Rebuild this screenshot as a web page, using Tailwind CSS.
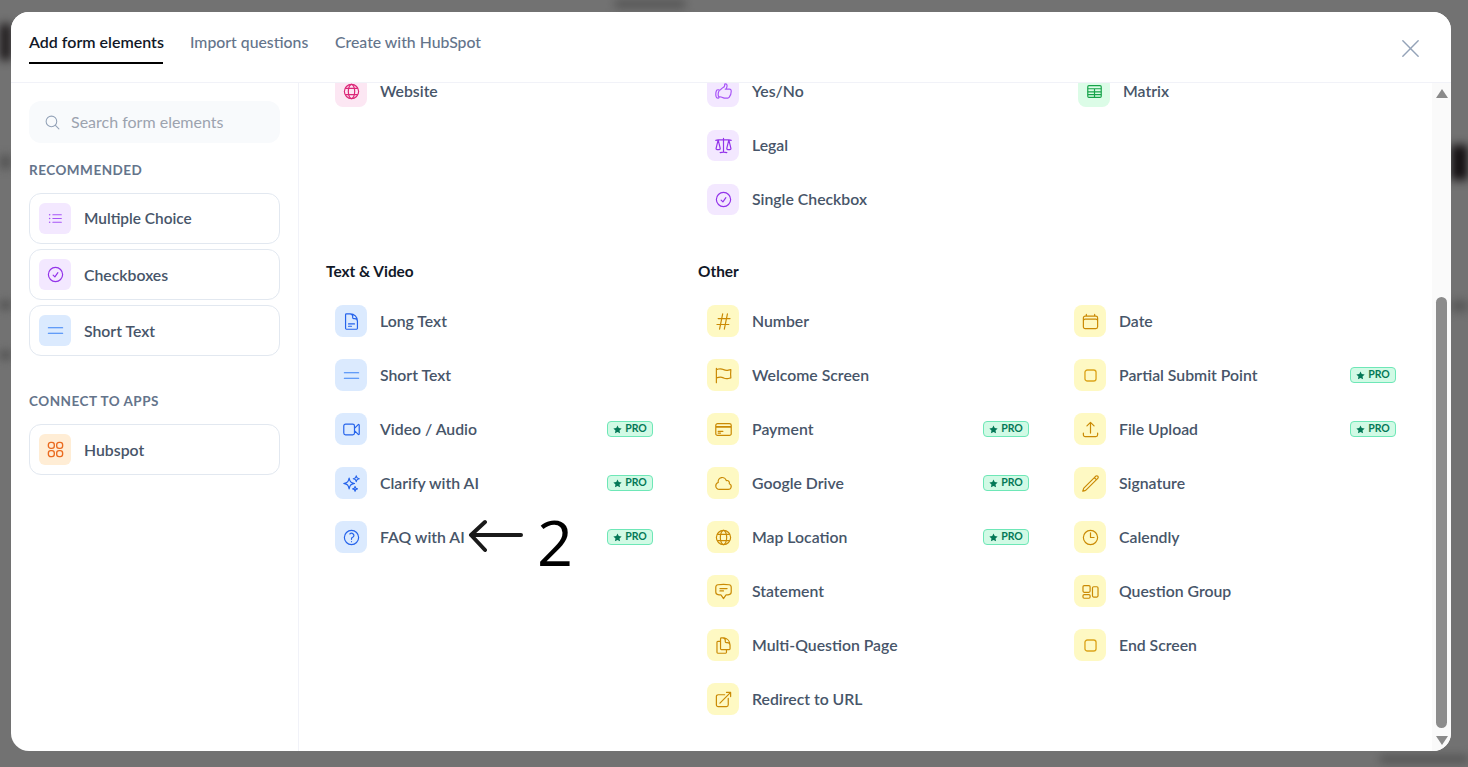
<!DOCTYPE html>
<html lang="en">
<head>
  <meta charset="UTF-8">
  <title>Add form elements</title>
  <script src="https://cdn.jsdelivr.net/npm/@tailwindcss/browser@4"></script>
</head>
<body class="relative w-[1468px] h-[767px] overflow-hidden bg-[#727272] font-['Lato',sans-serif]">

  <!-- Blurred page behind the modal -->
  <div class="absolute left-0 top-[24px] w-[11px] h-[36px] bg-[#1a1618] blur-[5px]"></div>
  <div class="absolute left-0 top-[155px] w-[11px] h-[14px] bg-[#555] blur-[4px]"></div>
  <div class="absolute left-0 top-[300px] w-[11px] h-[10px] bg-[#555] blur-[4px]"></div>
  <div class="absolute left-0 top-[350px] w-[11px] h-[10px] bg-[#555] blur-[4px]"></div>
  <div class="absolute left-[1451px] top-[145px] w-[17px] h-[35px] bg-[#141012] blur-[5px]"></div>
  <div class="absolute left-[1451px] top-[300px] w-[17px] h-[12px] bg-[#5a5a5a] blur-[4px]"></div>
  <div class="absolute left-[615px] top-0 w-[70px] h-[8px] bg-[#555] blur-[4px]"></div>
  <div class="absolute left-[1380px] top-[755px] w-[88px] h-[8px] bg-[#555] blur-[4px]"></div>

  <!-- Modal -->
  <div class="absolute left-[11px] top-[12px] w-[1440px] h-[739px] bg-white rounded-[18px] overflow-hidden flex flex-col">

    <!-- Tabs -->
    <div class="relative z-10 bg-white h-[71px] shrink-0 border-b border-[#f1f2f8] flex items-start justify-between pl-[18px] pr-[29px]">
      <div class="flex gap-[27px] text-[15.8px] leading-5">
        <div class="h-[52px] pt-[20px] border-b-2 border-black text-[16px] font-semibold text-[#111827] w-[134px] whitespace-nowrap">Add form elements</div>
        <div class="pt-[20px] text-[#64748b] font-medium w-[118px] whitespace-nowrap">Import questions</div>
        <div class="pt-[20px] text-[#64748b] font-medium w-[145px] whitespace-nowrap">Create with HubSpot</div>
      </div>
      <svg class="mt-[25px] w-[23px] h-[23px] text-[#94a3b8]" fill="none" viewBox="0 0 24 24" stroke="currentColor" stroke-width="1.5"><path stroke-linecap="round" stroke-linejoin="round" d="M4 20L20 4M4 4l16 16"/></svg>
    </div>

    <div class="flex flex-1 min-h-0">

      <!-- Sidebar -->
      <div class="w-[288px] shrink-0 border-r border-[#f1f2f8] pt-[18px] px-[18px]">
        <div class="h-[42px] rounded-xl bg-[#f8fafc] flex items-center pl-[15px] gap-[10px]">
          <svg class="w-[17px] h-[17px] text-[#94a3b8]" fill="none" viewBox="0 0 24 24" stroke="currentColor" stroke-width="1.5"><path stroke-linecap="round" stroke-linejoin="round" d="M21 21l-5.197-5.197m0 0A7.5 7.5 0 105.196 5.196a7.5 7.5 0 0010.607 10.607z"/></svg>
          <span class="text-[16px] text-[#9ca3af]">Search form elements</span>
        </div>

        <div class="mt-[18px] mb-[14px] text-[13.5px] leading-[18px] font-bold tracking-[0.5px] text-[#64748b]">RECOMMENDED</div>
        <div class="flex flex-col gap-[5px]">
          <div class="h-[51px] border border-[#e2e8f0] rounded-xl flex items-center pl-[9px] gap-[13px]">
            <div class="w-8 h-[31px] rounded-md bg-[#f3e8ff] flex items-center justify-center">
              <svg class="w-[17px] h-[17px] text-[#a855f7]" fill="none" viewBox="0 0 24 24" stroke="currentColor" stroke-width="1.5"><path stroke-linecap="round" stroke-linejoin="round" d="M8.25 6.75h12M8.25 12h12m-12 5.25h12M3.75 6.75h.007v.008H3.75V6.75zm.375 0a.375.375 0 11-.75 0 .375.375 0 01.75 0zM3.75 12h.007v.008H3.75V12zm.375 0a.375.375 0 11-.75 0 .375.375 0 01.75 0zm-.375 5.25h.007v.008H3.75v-.008zm.375 0a.375.375 0 11-.75 0 .375.375 0 01.75 0z"/></svg>
            </div>
            <span class="text-[15.4px] leading-[23px] font-semibold text-[#475569]">Multiple Choice</span>
          </div>
          <div class="h-[51px] border border-[#e2e8f0] rounded-xl flex items-center pl-[9px] gap-[13px]">
            <div class="w-8 h-[31px] rounded-md bg-[#f3e8ff] flex items-center justify-center">
              <svg class="w-[19px] h-[19px] text-[#9333ea]" fill="none" viewBox="0 0 24 24" stroke="currentColor" stroke-width="1.5"><path stroke-linecap="round" stroke-linejoin="round" d="M9 12.75L11.25 15 15 9.75M21 12a9 9 0 11-18 0 9 9 0 0118 0z"/></svg>
            </div>
            <span class="text-[15.8px] leading-[23px] font-semibold text-[#475569]">Checkboxes</span>
          </div>
          <div class="h-[51px] border border-[#e2e8f0] rounded-xl flex items-center pl-[9px] gap-[13px]">
            <div class="w-8 h-[31px] rounded-md bg-[#dbeafe] flex items-center justify-center">
              <svg class="w-[19px] h-[19px] text-[#3b82f6]" fill="none" viewBox="0 0 24 24" stroke="currentColor" stroke-width="1.5"><path stroke-linecap="round" d="M3 8.5h18M3 15.5h18"/></svg>
            </div>
            <span class="text-[15.8px] leading-[23px] font-semibold text-[#475569]">Short Text</span>
          </div>
        </div>

        <div class="mt-[36px] mb-[14px] text-[13.5px] leading-[18px] font-bold tracking-[0.5px] text-[#64748b]">CONNECT TO APPS</div>
        <div class="h-[51px] border border-[#e2e8f0] rounded-xl flex items-center pl-[9px] gap-[13px]">
          <div class="w-8 h-[31px] rounded-md bg-[#ffedd5] flex items-center justify-center">
            <svg class="w-[19px] h-[19px] text-[#ea6a1f]" fill="none" viewBox="0 0 24 24" stroke="currentColor" stroke-width="1.7"><rect x="3" y="3" width="7.5" height="7.5" rx="3"/><rect x="13.5" y="3" width="7.5" height="7.5" rx="3"/><rect x="3" y="13.5" width="7.5" height="7.5" rx="3"/><rect x="13.5" y="13.5" width="7.5" height="7.5" rx="3"/></svg>
          </div>
          <span class="text-[15.8px] leading-[23px] font-semibold text-[#475569]">Hubspot</span>
        </div>
      </div>

      <!-- Elements list -->
      <div class="relative flex-1 min-w-0 pl-[27px]">
        <div class="-mt-2 grid grid-cols-[372px_371px_340px]">
          <div class="pr-9">
            <div class="flex items-center h-8 pl-[9px] gap-[13px]">
              <div class="w-8 h-[31px] rounded-lg bg-[#fce7f3] flex items-center justify-center">
                <svg class="w-[19px] h-[19px] text-[#db2777]" fill="none" viewBox="0 0 24 24" stroke="currentColor" stroke-width="1.5"><circle cx="12" cy="12" r="9"/><ellipse cx="12" cy="12" rx="4" ry="9"/><path d="M4 8h16M4 16h16"/></svg>
              </div>
              <span class="text-[15.8px] font-semibold text-[#475569]">Website</span>
            </div>
          </div>
          <div class="flex flex-col gap-[22px]">
            <div class="flex items-center h-8 pl-[9px] gap-[13px]">
              <div class="w-8 h-[31px] mt-px rounded-lg bg-[#f3e8ff] flex items-center justify-center">
                <svg class="w-[19px] h-[19px] text-[#a855f7]" fill="none" viewBox="0 0 24 24" stroke="currentColor" stroke-width="1.5"><path stroke-linecap="round" stroke-linejoin="round" d="M6.633 10.5c.806 0 1.533-.446 2.031-1.08a9.041 9.041 0 012.861-2.4c.723-.384 1.35-.956 1.653-1.715a4.498 4.498 0 00.322-1.672V3a.75.75 0 01.75-.75A2.25 2.25 0 0116.5 4.5c0 1.152-.26 2.243-.723 3.218-.266.558.107 1.282.725 1.282h3.126c1.026 0 1.945.694 2.054 1.715.045.422.068.85.068 1.285a11.95 11.95 0 01-2.649 7.521c-.388.482-.987.729-1.605.729H13.48c-.483 0-.964-.078-1.423-.23l-3.114-1.04a4.501 4.501 0 00-1.423-.23H5.904M14.25 9h2.25M5.904 18.75c.083.205.173.405.27.602.197.4-.078.898-.523.898h-.908c-.889 0-1.713-.518-1.972-1.368a12 12 0 01-.521-3.507c0-1.553.295-3.036.831-4.398C3.387 10.203 4.167 9.75 5 9.75h1.053c.472 0 .745.556.5.96a8.958 8.958 0 00-1.302 4.665c0 1.194.232 2.333.654 3.375z"/></svg>
              </div>
              <span class="text-[15.8px] font-semibold text-[#475569]">Yes/No</span>
            </div>
            <div class="flex items-center h-8 pl-[9px] gap-[13px]">
              <div class="w-8 h-[31px] mt-px rounded-lg bg-[#f3e8ff] flex items-center justify-center">
                <svg class="w-[19px] h-[19px] text-[#9333ea]" fill="none" viewBox="0 0 24 24" stroke="currentColor" stroke-width="1.5"><path stroke-linecap="round" stroke-linejoin="round" d="M12 3v17.25m0 0c-1.472 0-2.882.265-4.185.75M12 20.25c1.472 0 2.882.265 4.185.75M18.75 4.97A48.416 48.416 0 0012 4.5c-2.291 0-4.545.16-6.75.47m13.5 0c1.01.143 2.01.317 3 .52m-3-.52l2.62 10.726c.122.499-.106 1.028-.589 1.202a5.988 5.988 0 01-2.031.352 5.988 5.988 0 01-2.031-.352c-.483-.174-.711-.703-.59-1.202L18.75 4.971zm-16.5.52c.99-.203 1.99-.377 3-.52m0 0l2.62 10.726c.122.499-.106 1.028-.589 1.202a5.989 5.989 0 01-2.031.352 5.989 5.989 0 01-2.031-.352c-.483-.174-.711-.703-.59-1.202L5.25 4.971z"/></svg>
              </div>
              <span class="text-[15.8px] font-semibold text-[#475569]">Legal</span>
            </div>
            <div class="flex items-center h-8 pl-[9px] gap-[13px]">
              <div class="w-8 h-[31px] mt-px rounded-lg bg-[#f3e8ff] flex items-center justify-center">
                <svg class="w-[19px] h-[19px] text-[#9333ea]" fill="none" viewBox="0 0 24 24" stroke="currentColor" stroke-width="1.5"><path stroke-linecap="round" stroke-linejoin="round" d="M9 12.75L11.25 15 15 9.75M21 12a9 9 0 11-18 0 9 9 0 0118 0z"/></svg>
              </div>
              <span class="text-[15.8px] font-semibold text-[#475569]">Single Checkbox</span>
            </div>
          </div>
          <div>
            <div class="flex items-center h-8 pl-[9px] gap-[13px]">
              <div class="w-8 h-[31px] mt-px rounded-lg bg-[#dcfce7] flex items-center justify-center">
                <svg class="w-[19px] h-[19px] text-[#16a34a]" fill="none" viewBox="0 0 24 24" stroke="currentColor" stroke-width="1.5"><rect x="3.5" y="4.5" width="17" height="15" rx="1.5"/><path d="M3.5 8.5h17M3.5 12.5h17M3.5 16h17M12 8.5v11"/></svg>
              </div>
              <span class="text-[15.8px] font-semibold text-[#475569]">Matrix</span>
            </div>
          </div>
        </div>

        <div class="mt-[46px] grid grid-cols-[372px_707px]">
          <!-- Text & Video -->
          <div>
            <div class="h-5 leading-5 text-[15.4px] font-bold text-[#111827] mb-6">Text &amp; Video</div>
            <div class="w-[336px] flex flex-col gap-[22px]">
              <div class="flex items-center h-8 pl-[9px] gap-[13px]">
                <div class="w-8 h-8 rounded-lg bg-[#dbeafe] flex items-center justify-center">
                  <svg class="w-[19px] h-[19px] text-[#2563eb]" fill="none" viewBox="0 0 24 24" stroke="currentColor" stroke-width="1.5"><path stroke-linecap="round" stroke-linejoin="round" d="M19.5 14.25v-2.625a3.375 3.375 0 00-3.375-3.375h-1.5A1.125 1.125 0 0113.5 7.125v-1.5a3.375 3.375 0 00-3.375-3.375H8.25m0 12.75h7.5m-7.5 3H12M10.5 2.25H5.625c-.621 0-1.125.504-1.125 1.125v17.25c0 .621.504 1.125 1.125 1.125h12.75c.621 0 1.125-.504 1.125-1.125V11.25a9 9 0 00-9-9z"/></svg>
                </div>
                <span class="text-[15.8px] font-semibold text-[#475569]">Long Text</span>
              </div>
              <div class="flex items-center h-8 pl-[9px] gap-[13px]">
                <div class="w-8 h-8 rounded-lg bg-[#dbeafe] flex items-center justify-center">
                  <svg class="w-[19px] h-[19px] text-[#3b82f6]" fill="none" viewBox="0 0 24 24" stroke="currentColor" stroke-width="1.5"><path stroke-linecap="round" d="M3 8.5h18M3 15.5h18"/></svg>
                </div>
                <span class="text-[15.8px] font-semibold text-[#475569]">Short Text</span>
              </div>
              <div class="flex items-center h-8 pl-[9px] pr-[9px] gap-[13px]">
                <div class="w-8 h-8 rounded-lg bg-[#dbeafe] flex items-center justify-center">
                  <svg class="w-[19px] h-[19px] text-[#2563eb]" fill="none" viewBox="0 0 24 24" stroke="currentColor" stroke-width="1.5"><path stroke-linecap="round" stroke-linejoin="round" d="M15.75 10.5l4.72-4.72a.75.75 0 011.28.53v11.38a.75.75 0 01-1.28.53l-4.72-4.72M4.5 18.75h9a2.25 2.25 0 002.25-2.25v-9a2.25 2.25 0 00-2.25-2.25h-9A2.25 2.25 0 002.25 7.5v9a2.25 2.25 0 002.25 2.25z"/></svg>
                </div>
                <span class="text-[15.8px] font-semibold text-[#475569]">Video / Audio</span>
                <span class="ml-auto w-[46px] h-4 rounded-[4px] border border-[#6ee7b7] bg-[#d1fae5] text-[#047857] text-[10.5px] font-bold flex items-center justify-center gap-[3px]"><svg class="w-[9px] h-[9px]" viewBox="0 0 20 20" fill="currentColor"><path d="M10 1l2.8 5.9 6.4.8-4.7 4.4 1.2 6.4L10 15.4l-5.7 3.1 1.2-6.4L.8 7.7l6.4-.8z"/></svg>PRO</span>
              </div>
              <div class="flex items-center h-8 pl-[9px] pr-[9px] gap-[13px]">
                <div class="w-8 h-8 rounded-lg bg-[#dbeafe] flex items-center justify-center">
                  <svg class="w-[19px] h-[19px] text-[#2563eb]" fill="none" viewBox="0 0 24 24" stroke="currentColor" stroke-width="1.5"><path stroke-linecap="round" stroke-linejoin="round" d="M9.813 15.904L9 18.75l-.813-2.846a4.5 4.5 0 00-3.09-3.09L2.25 12l2.846-.813a4.5 4.5 0 003.09-3.09L9 5.25l.813 2.846a4.5 4.5 0 003.09 3.09L15.75 12l-2.846.813a4.5 4.5 0 00-3.09 3.09zM18.259 8.715L18 9.75l-.259-1.035a3.375 3.375 0 00-2.455-2.456L14.25 6l1.036-.259a3.375 3.375 0 002.455-2.456L18 2.25l.259 1.035a3.375 3.375 0 002.456 2.456L21.75 6l-1.035.259a3.375 3.375 0 00-2.456 2.456zM16.894 20.567L16.5 21.75l-.394-1.183a2.25 2.25 0 00-1.423-1.423L13.5 18.75l1.183-.394a2.25 2.25 0 001.423-1.423l.394-1.183.394 1.183a2.25 2.25 0 001.423 1.423l1.183.394-1.183.394a2.25 2.25 0 00-1.423 1.423z"/></svg>
                </div>
                <span class="text-[15.8px] font-semibold text-[#475569]">Clarify with AI</span>
                <span class="ml-auto w-[46px] h-4 rounded-[4px] border border-[#6ee7b7] bg-[#d1fae5] text-[#047857] text-[10.5px] font-bold flex items-center justify-center gap-[3px]"><svg class="w-[9px] h-[9px]" viewBox="0 0 20 20" fill="currentColor"><path d="M10 1l2.8 5.9 6.4.8-4.7 4.4 1.2 6.4L10 15.4l-5.7 3.1 1.2-6.4L.8 7.7l6.4-.8z"/></svg>PRO</span>
              </div>
              <div class="flex items-center h-8 pl-[9px] pr-[9px] gap-[13px]">
                <div class="w-8 h-8 rounded-lg bg-[#dbeafe] flex items-center justify-center">
                  <svg class="w-[19px] h-[19px] text-[#2563eb]" fill="none" viewBox="0 0 24 24" stroke="currentColor" stroke-width="1.5"><path stroke-linecap="round" stroke-linejoin="round" d="M9.879 7.519c1.171-1.025 3.071-1.025 4.242 0 1.172 1.025 1.172 2.687 0 3.712-.203.179-.43.326-.67.442-.745.361-1.45.999-1.45 1.827v.75M21 12a9 9 0 11-18 0 9 9 0 0118 0zm-9 5.25h.008v.008H12v-.008z"/></svg>
                </div>
                <span class="text-[15.8px] font-semibold text-[#475569]">FAQ with AI</span>
                <span class="ml-auto w-[46px] h-4 rounded-[4px] border border-[#6ee7b7] bg-[#d1fae5] text-[#047857] text-[10.5px] font-bold flex items-center justify-center gap-[3px]"><svg class="w-[9px] h-[9px]" viewBox="0 0 20 20" fill="currentColor"><path d="M10 1l2.8 5.9 6.4.8-4.7 4.4 1.2 6.4L10 15.4l-5.7 3.1 1.2-6.4L.8 7.7l6.4-.8z"/></svg>PRO</span>
              </div>
            </div>
          </div>

          <!-- Other -->
          <div>
            <div class="h-5 leading-5 text-[15.4px] font-bold text-[#111827] mb-6">Other</div>
            <div class="grid grid-cols-[340px_340px] gap-x-[27px]">
              <div class="flex flex-col gap-[22px]">
                <div class="flex items-center h-8 pl-[9px] pr-[9px] gap-[13px]">
                  <div class="w-8 h-8 rounded-lg bg-[#fef9c3] flex items-center justify-center">
                    <svg class="w-[19px] h-[19px] text-[#ca8a04]" fill="none" viewBox="0 0 24 24" stroke="currentColor" stroke-width="1.5"><path stroke-linecap="round" stroke-linejoin="round" d="M5.25 8.25h15m-16.5 7.5h15m-1.8-13.5l-3.9 19.5m-2.1-19.5l-3.9 19.5"/></svg>
                  </div>
                  <span class="text-[15.8px] font-semibold text-[#475569]">Number</span>
                </div>
                <div class="flex items-center h-8 pl-[9px] pr-[9px] gap-[13px]">
                  <div class="w-8 h-8 rounded-lg bg-[#fef9c3] flex items-center justify-center">
                    <svg class="w-[19px] h-[19px] text-[#ca8a04]" fill="none" viewBox="0 0 24 24" stroke="currentColor" stroke-width="1.5"><path stroke-linecap="round" stroke-linejoin="round" d="M3 3v1.5M3 21v-6m0 0l2.77-.693a9 9 0 016.208.682l.108.054a9 9 0 006.086.71l3.114-.732a48.524 48.524 0 01-.005-10.499l-3.11.732a9 9 0 01-6.085-.711l-.108-.054a9 9 0 00-6.208-.682L3 4.5M3 15V4.5"/></svg>
                  </div>
                  <span class="text-[15.8px] font-semibold text-[#475569]">Welcome Screen</span>
                </div>
                <div class="flex items-center h-8 pl-[9px] pr-[9px] gap-[13px]">
                  <div class="w-8 h-8 rounded-lg bg-[#fef9c3] flex items-center justify-center">
                    <svg class="w-[19px] h-[19px] text-[#ca8a04]" fill="none" viewBox="0 0 24 24" stroke="currentColor" stroke-width="1.5"><path stroke-linecap="round" stroke-linejoin="round" d="M2.25 8.25h19.5M2.25 9h19.5m-16.5 5.25h6m-6 2.25h3m-3.75 3h15a2.25 2.25 0 002.25-2.25V6.75A2.25 2.25 0 0019.5 4.5h-15a2.25 2.25 0 00-2.25 2.25v10.5A2.25 2.25 0 004.5 19.5z"/></svg>
                  </div>
                  <span class="text-[15.8px] font-semibold text-[#475569]">Payment</span>
                  <span class="ml-auto w-[46px] h-4 rounded-[4px] border border-[#6ee7b7] bg-[#d1fae5] text-[#047857] text-[10.5px] font-bold flex items-center justify-center gap-[3px]"><svg class="w-[9px] h-[9px]" viewBox="0 0 20 20" fill="currentColor"><path d="M10 1l2.8 5.9 6.4.8-4.7 4.4 1.2 6.4L10 15.4l-5.7 3.1 1.2-6.4L.8 7.7l6.4-.8z"/></svg>PRO</span>
                </div>
                <div class="flex items-center h-8 pl-[9px] pr-[9px] gap-[13px]">
                  <div class="w-8 h-8 rounded-lg bg-[#fef9c3] flex items-center justify-center">
                    <svg class="w-[19px] h-[19px] text-[#ca8a04]" fill="none" viewBox="0 0 24 24" stroke="currentColor" stroke-width="1.5"><path stroke-linecap="round" stroke-linejoin="round" d="M2.25 15a4.5 4.5 0 004.5 4.5H18a3.75 3.75 0 001.332-7.257 3 3 0 00-3.758-3.848 5.25 5.25 0 00-10.233 2.33A4.502 4.502 0 002.25 15z"/></svg>
                  </div>
                  <span class="text-[15.8px] font-semibold text-[#475569]">Google Drive</span>
                  <span class="ml-auto w-[46px] h-4 rounded-[4px] border border-[#6ee7b7] bg-[#d1fae5] text-[#047857] text-[10.5px] font-bold flex items-center justify-center gap-[3px]"><svg class="w-[9px] h-[9px]" viewBox="0 0 20 20" fill="currentColor"><path d="M10 1l2.8 5.9 6.4.8-4.7 4.4 1.2 6.4L10 15.4l-5.7 3.1 1.2-6.4L.8 7.7l6.4-.8z"/></svg>PRO</span>
                </div>
                <div class="flex items-center h-8 pl-[9px] pr-[9px] gap-[13px]">
                  <div class="w-8 h-8 rounded-lg bg-[#fef9c3] flex items-center justify-center">
                    <svg class="w-[19px] h-[19px] text-[#ca8a04]" fill="none" viewBox="0 0 24 24" stroke="currentColor" stroke-width="1.5"><circle cx="12" cy="12" r="9"/><ellipse cx="12" cy="12" rx="4" ry="9"/><path d="M4 8h16M4 16h16"/></svg>
                  </div>
                  <span class="text-[15.8px] font-semibold text-[#475569]">Map Location</span>
                  <span class="ml-auto w-[46px] h-4 rounded-[4px] border border-[#6ee7b7] bg-[#d1fae5] text-[#047857] text-[10.5px] font-bold flex items-center justify-center gap-[3px]"><svg class="w-[9px] h-[9px]" viewBox="0 0 20 20" fill="currentColor"><path d="M10 1l2.8 5.9 6.4.8-4.7 4.4 1.2 6.4L10 15.4l-5.7 3.1 1.2-6.4L.8 7.7l6.4-.8z"/></svg>PRO</span>
                </div>
                <div class="flex items-center h-8 pl-[9px] pr-[9px] gap-[13px]">
                  <div class="w-8 h-8 rounded-lg bg-[#fef9c3] flex items-center justify-center">
                    <svg class="w-[19px] h-[19px] text-[#ca8a04]" fill="none" viewBox="0 0 24 24" stroke="currentColor" stroke-width="1.5"><path stroke-linecap="round" stroke-linejoin="round" d="M7.5 8.25h9m-9 3H12m-9.75 1.51c0 1.6 1.123 2.994 2.707 3.227 1.129.166 2.27.293 3.423.379.35.026.67.21.865.501L12 21l2.755-4.133a1.14 1.14 0 01.865-.501 48.172 48.172 0 003.423-.379c1.584-.233 2.707-1.626 2.707-3.228V6.741c0-1.602-1.123-2.995-2.707-3.228A48.394 48.394 0 0012 3c-2.392 0-4.744.175-7.043.513C3.373 3.746 2.25 5.14 2.25 6.741v6.018z"/></svg>
                  </div>
                  <span class="text-[15.8px] font-semibold text-[#475569]">Statement</span>
                </div>
                <div class="flex items-center h-8 pl-[9px] pr-[9px] gap-[13px]">
                  <div class="w-8 h-8 rounded-lg bg-[#fef9c3] flex items-center justify-center">
                    <svg class="w-[19px] h-[19px] text-[#ca8a04]" fill="none" viewBox="0 0 24 24" stroke="currentColor" stroke-width="1.5"><path stroke-linecap="round" stroke-linejoin="round" d="M15.75 17.25v3.375c0 .621-.504 1.125-1.125 1.125h-9.75a1.125 1.125 0 01-1.125-1.125V7.875c0-.621.504-1.125 1.125-1.125H6.75a9.06 9.06 0 011.5.124m7.5 10.376h3.375c.621 0 1.125-.504 1.125-1.125V11.25c0-4.46-3.243-8.161-7.5-8.876a9.06 9.06 0 00-1.5-.124H9.375c-.621 0-1.125.504-1.125 1.125v3.5m7.5 10.375H9.375a1.125 1.125 0 01-1.125-1.125v-9.25m12 6.625v-1.875a3.375 3.375 0 00-3.375-3.375h-1.5a1.125 1.125 0 01-1.125-1.125v-1.5a3.375 3.375 0 00-3.375-3.375H9.75"/></svg>
                  </div>
                  <span class="text-[15.8px] font-semibold text-[#475569]">Multi-Question Page</span>
                </div>
                <div class="flex items-center h-8 pl-[9px] pr-[9px] gap-[13px]">
                  <div class="w-8 h-8 rounded-lg bg-[#fef9c3] flex items-center justify-center">
                    <svg class="w-[19px] h-[19px] text-[#ca8a04]" fill="none" viewBox="0 0 24 24" stroke="currentColor" stroke-width="1.5"><path stroke-linecap="round" stroke-linejoin="round" d="M13.5 6H5.25A2.25 2.25 0 003 8.25v10.5A2.25 2.25 0 005.25 21h10.5A2.25 2.25 0 0018 18.75V10.5m-10.5 6L21 3m0 0h-5.25M21 3v5.25"/></svg>
                  </div>
                  <span class="text-[15.8px] font-semibold text-[#475569]">Redirect to URL</span>
                </div>
              </div>

              <div class="flex flex-col gap-[22px]">
                <div class="flex items-center h-8 pl-[9px] pr-[9px] gap-[13px]">
                  <div class="w-8 h-8 rounded-lg bg-[#fef9c3] flex items-center justify-center">
                    <svg class="w-[19px] h-[19px] text-[#ca8a04]" fill="none" viewBox="0 0 24 24" stroke="currentColor" stroke-width="1.5"><path stroke-linecap="round" stroke-linejoin="round" d="M6.75 3v2.25M17.25 3v2.25M3 18.75V7.5a2.25 2.25 0 012.25-2.25h13.5A2.25 2.25 0 0121 7.5v11.25m-18 0A2.25 2.25 0 005.25 21h13.5A2.25 2.25 0 0021 18.75m-18 0v-7.5A2.25 2.25 0 015.25 9h13.5A2.25 2.25 0 0121 11.25v7.5"/></svg>
                  </div>
                  <span class="text-[15.8px] font-semibold text-[#475569]">Date</span>
                </div>
                <div class="flex items-center h-8 pl-[9px] pr-[9px] gap-[13px]">
                  <div class="w-8 h-8 rounded-lg bg-[#fef9c3] flex items-center justify-center">
                    <svg class="w-[19px] h-[19px] text-[#dca51c]" fill="none" viewBox="0 0 24 24" stroke="currentColor" stroke-width="1.7"><rect x="5" y="5" width="14" height="14" rx="3"/></svg>
                  </div>
                  <span class="text-[15.8px] font-semibold text-[#475569]">Partial Submit Point</span>
                  <span class="ml-auto w-[46px] h-4 rounded-[4px] border border-[#6ee7b7] bg-[#d1fae5] text-[#047857] text-[10.5px] font-bold flex items-center justify-center gap-[3px]"><svg class="w-[9px] h-[9px]" viewBox="0 0 20 20" fill="currentColor"><path d="M10 1l2.8 5.9 6.4.8-4.7 4.4 1.2 6.4L10 15.4l-5.7 3.1 1.2-6.4L.8 7.7l6.4-.8z"/></svg>PRO</span>
                </div>
                <div class="flex items-center h-8 pl-[9px] pr-[9px] gap-[13px]">
                  <div class="w-8 h-8 rounded-lg bg-[#fef9c3] flex items-center justify-center">
                    <svg class="w-[19px] h-[19px] text-[#ca8a04]" fill="none" viewBox="0 0 24 24" stroke="currentColor" stroke-width="1.5"><path stroke-linecap="round" stroke-linejoin="round" d="M3 16.5v2.25A2.25 2.25 0 005.25 21h13.5A2.25 2.25 0 0021 18.75V16.5m-13.5-9L12 3m0 0l4.5 4.5M12 3v13.5"/></svg>
                  </div>
                  <span class="text-[15.8px] font-semibold text-[#475569]">File Upload</span>
                  <span class="ml-auto w-[46px] h-4 rounded-[4px] border border-[#6ee7b7] bg-[#d1fae5] text-[#047857] text-[10.5px] font-bold flex items-center justify-center gap-[3px]"><svg class="w-[9px] h-[9px]" viewBox="0 0 20 20" fill="currentColor"><path d="M10 1l2.8 5.9 6.4.8-4.7 4.4 1.2 6.4L10 15.4l-5.7 3.1 1.2-6.4L.8 7.7l6.4-.8z"/></svg>PRO</span>
                </div>
                <div class="flex items-center h-8 pl-[9px] pr-[9px] gap-[13px]">
                  <div class="w-8 h-8 rounded-lg bg-[#fef9c3] flex items-center justify-center">
                    <svg class="w-[19px] h-[19px] text-[#ca8a04]" fill="none" viewBox="0 0 24 24" stroke="currentColor" stroke-width="1.5"><path stroke-linecap="round" stroke-linejoin="round" d="M16.862 4.487l1.687-1.688a1.875 1.875 0 112.652 2.652L6.832 19.82a4.5 4.5 0 01-1.897 1.13l-2.685.8.8-2.685a4.5 4.5 0 011.13-1.897L16.863 4.487zm0 0L19.5 7.125"/></svg>
                  </div>
                  <span class="text-[15.8px] font-semibold text-[#475569]">Signature</span>
                </div>
                <div class="flex items-center h-8 pl-[9px] pr-[9px] gap-[13px]">
                  <div class="w-8 h-8 rounded-lg bg-[#fef9c3] flex items-center justify-center">
                    <svg class="w-[19px] h-[19px] text-[#ca8a04]" fill="none" viewBox="0 0 24 24" stroke="currentColor" stroke-width="1.5"><path stroke-linecap="round" stroke-linejoin="round" d="M12 6v6h4.5m4.5 0a9 9 0 11-18 0 9 9 0 0118 0z"/></svg>
                  </div>
                  <span class="text-[15.8px] font-semibold text-[#475569]">Calendly</span>
                </div>
                <div class="flex items-center h-8 pl-[9px] pr-[9px] gap-[13px]">
                  <div class="w-8 h-8 rounded-lg bg-[#fef9c3] flex items-center justify-center">
                    <svg class="w-[19px] h-[19px] text-[#ca8a04]" fill="none" viewBox="0 0 24 24" stroke="currentColor" stroke-width="1.5"><rect x="2.5" y="4.5" width="9" height="8.5" rx="1.5"/><rect x="2.5" y="16" width="9" height="4.5" rx="1.5"/><rect x="14.5" y="6" width="7" height="13" rx="1.5"/></svg>
                  </div>
                  <span class="text-[15.8px] font-semibold text-[#475569]">Question Group</span>
                </div>
                <div class="flex items-center h-8 pl-[9px] pr-[9px] gap-[13px]">
                  <div class="w-8 h-8 rounded-lg bg-[#fef9c3] flex items-center justify-center">
                    <svg class="w-[19px] h-[19px] text-[#dca51c]" fill="none" viewBox="0 0 24 24" stroke="currentColor" stroke-width="1.7"><rect x="5" y="5" width="14" height="14" rx="3"/></svg>
                  </div>
                  <span class="text-[15.8px] font-semibold text-[#475569]">End Screen</span>
                </div>
              </div>
            </div>
          </div>
        </div>

        <!-- Annotation drawn on top of the screenshot -->
        <svg class="absolute left-[169px] top-[436px] w-[56px] h-[36px] text-[#1a1a1a]" fill="none" viewBox="0 0 56 36" stroke="currentColor" stroke-width="4" stroke-linecap="round" stroke-linejoin="round"><path d="M3 16h50M17 3L3 16l14 15"/></svg>
        <span class="absolute left-[238px] top-[415px] text-[63px] leading-[88px] font-medium text-black font-['Open_Sans',sans-serif]">2</span>
      </div>

      <!-- Scrollbar -->
      <div class="w-[19px] shrink-0 bg-[#fafafa] flex flex-col items-center">
        <div class="mt-[6px] w-0 h-0 border-x-[6px] border-x-transparent border-b-[9px] border-b-[#8a8a8a]"></div>
        <div class="mt-[199px] w-[11px] h-[431px] rounded-[6px] bg-[#8c8c8c]"></div>
        <div class="mt-[8px] w-0 h-0 border-x-[6px] border-x-transparent border-t-[9px] border-t-[#8a8a8a]"></div>
      </div>
    </div>
  </div>
</body>
</html>
